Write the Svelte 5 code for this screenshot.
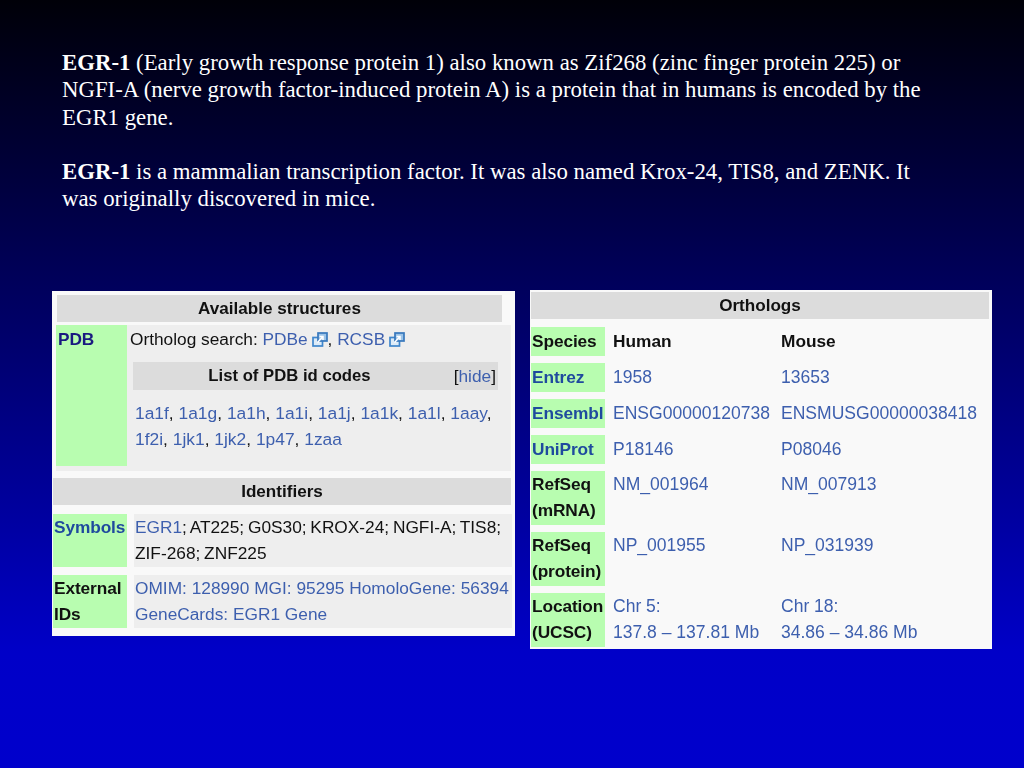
<script>
  const rows = [
    { head: "Entrez", link: true, human: ["1958"], mouse: ["13653"] },
    { head: "Ensembl", link: true, human: ["ENSG00000120738"], mouse: ["ENSMUSG00000038418"] },
    { head: "UniProt", link: true, human: ["P18146"], mouse: ["P08046"] },
    { head: "RefSeq (mRNA)", human: ["NM_001964"], mouse: ["NM_007913"], tall: true },
    { head: "RefSeq (protein)", human: ["NP_001955"], mouse: ["NP_031939"], tall: true },
    { head: "Location (UCSC)", human: ["Chr 5:", "137.8 – 137.81 Mb"], mouse: ["Chr 18:", "34.86 – 34.86 Mb"], tall: true },
  ];
  const codes = ["1a1f", "1a1g", "1a1h", "1a1i", "1a1j", "1a1k", "1a1l", "1aay", "1f2i", "1jk1", "1jk2", "1p47", "1zaa"];
</script>

{#snippet extIcon()}
  <svg class="ext" viewBox="0 0 16 15" width="16" height="15" aria-hidden="true">
    <rect x="1" y="5.5" width="9.5" height="8.5" fill="#dcebf8" stroke="#3f86cc" stroke-width="1.7" />
    <rect x="6" y="1" width="9" height="8" fill="#9cc4e8" stroke="#3878bd" stroke-width="1.7" />
    <path d="M5.5 10.5 L10.5 5 M7.5 4.6 H11 V8" fill="none" stroke="#fff" stroke-width="1.5" />
  </svg>
{/snippet}

<main class="slide">
  <section class="intro">
    <p><b>EGR-1</b> (Early growth response protein 1) also known as Zif268 (zinc finger protein 225) or<br />NGFI-A (nerve growth factor-induced protein A) is a protein that in humans is encoded by the<br />EGR1 gene.</p>
    <p><b>EGR-1</b> is a mammalian transcription factor. It was also named Krox-24, TIS8, and ZENK. It<br />was originally discovered in mice.</p>
  </section>

  <section class="tables">
    <div class="panel left">
      <h2 class="bar first">Available structures</h2>
      <div class="pdb">
        <div class="side"><a href="#pdb"><b>PDB</b></a></div>
        <div class="pdb-body">
          <div class="search">Ortholog search: <a href="#pdbe">PDBe</a> {@render extIcon()}, <a href="#rcsb">RCSB</a> {@render extIcon()}</div>
          <div class="bar inner"><span>List of PDB id codes</span><span class="hide">[<a href="#hide">hide</a>]</span></div>
          <div class="codes">
            {#each codes as code, i}<a href="#{code}">{code}</a>{i < codes.length - 1 ? ", " : ""}{#if i === 7}<br />{/if}{/each}
          </div>
        </div>
      </div>

      <h2 class="bar ident">Identifiers</h2>
      <div class="id-row">
        <div class="side"><a href="#symbols"><b>Symbols</b></a></div>
        <div class="id-cell symbols"><a href="#egr1">EGR1</a>; AT225; G0S30; KROX-24; NGFI-A; TIS8;<br />ZIF-268; ZNF225</div>
      </div>
      <div class="id-row">
        <div class="side"><b>External<br />IDs</b></div>
        <div class="id-cell">
          <a href="#omim">OMIM:</a> <a href="#128990">128990</a> <a href="#mgi">MGI:</a> <a href="#95295">95295</a> <a href="#hg">HomoloGene:</a> <a href="#56394">56394</a><br />
          <a href="#gc">GeneCards:</a> <a href="#gene">EGR1 Gene</a>
        </div>
      </div>
    </div>

    <div class="panel right">
      <h2 class="bar first">Orthologs</h2>
      <div class="orth">
        <div class="side"><b>Species</b></div>
        <b class="val">Human</b>
        <b class="val">Mouse</b>
        {#each rows as row}
          <div class="side" class:tall={row.tall}>
            {#if row.link}<a href="#{row.head}"><b>{row.head}</b></a>{:else}<b>{row.head}</b>{/if}
          </div>
          <div class="val">{#each row.human as line}<a href="#h">{line}</a><br />{/each}</div>
          <div class="val">{#each row.mouse as line}<a href="#m">{line}</a><br />{/each}</div>
        {/each}
      </div>
    </div>
  </section>
</main>

<style>
  :global(body) {
    margin: 0;
  }

  .slide {
    width: 1024px;
    height: 768px;
    overflow: hidden;
    background: linear-gradient(#000008, #0000c8 85%, #0000cc);
  }

  .intro {
    height: 290px;
    box-sizing: border-box;
    padding: 49px 0 0 62px;
    color: #fff;
    font: 22.8px/27.3px "Liberation Serif", serif;
  }

  .intro p {
    margin: 0 0 27.3px;
  }

  .tables {
    display: flex;
    align-items: flex-start;
    gap: 15px;
    padding-left: 52px;
  }

  .panel {
    box-sizing: border-box;
    background: #f9f9f9;
    color: #111;
    font: 17.3px/26px "Liberation Sans", sans-serif;
    filter: blur(0.45px);
  }

  .left {
    width: 463px;
    margin-top: 1px;
    height: 345px;
    padding: 4px 4px 0 1px;
  }

  .right {
    width: 462px;
    height: 359px;
    padding: 2px 3px 0 1px;
    font-size: 17.55px;
  }

  a {
    color: #3d5fae;
    text-decoration: none;
  }

  .side a {
    color: #1f4a9e;
  }

  .side b {
    font-size: 17.3px;
    letter-spacing: -0.1px;
  }

  .bar {
    margin: 0;
    height: 27px;
    background: #dcdcdc;
    color: #111;
    font-size: 17.1px;
    font-weight: bold;
    line-height: 27px;
    text-align: center;
  }

  .left .first {
    margin: 0 9px 0 4px;
  }

  .side {
    background: #b8fdb0;
    padding-left: 1px;
    box-sizing: border-box;
  }

  .pdb {
    display: grid;
    grid-template-columns: 71px 384px;
    margin: 3px 0 0 3px;
    background: #eeeeee;
    height: 146px;
  }

  .pdb .side {
    height: 141px;
    padding: 1px 0 0 2px;
    color: #1a1a80;
  }

  .pdb .side a {
    color: #1a1a80;
  }

  .pdb-body {
    padding: 1px 13px 0 3px;
  }

  .search {
    white-space: nowrap;
  }

  .ext {
    vertical-align: -2px;
    margin-left: -1px;
  }

  .inner {
    position: relative;
    margin: 10px 0 0 3px;
    height: 28px;
    font-size: 16.7px;
    line-height: 28px;
    padding-right: 52px;
  }

  .hide {
    position: absolute;
    right: 2px;
    top: 0;
    font-size: 17.3px;
    font-weight: normal;
  }

  .codes {
    margin: 10px 0 0 5px;
    white-space: nowrap;
    font-size: 17.4px;
  }

  .ident {
    margin-top: 7px;
  }

  .id-row {
    display: grid;
    grid-template-columns: 74px 378px;
    gap: 7px;
    margin-top: 8px;
  }

  .ident + .id-row {
    margin-top: 9px;
  }

  .id-row .side {
    height: 53px;
    padding: 0 0 0 1px;
  }

  .id-cell {
    background: #eeeeee;
    padding-left: 1px;
    white-space: nowrap;
  }

  .symbols {
    word-spacing: -1px;
  }

  .orth {
    display: grid;
    grid-template-columns: 74px 168px 1fr;
    row-gap: 7px;
    margin-top: 8px;
    align-items: start;
  }

  .orth .side {
    height: 29px;
    line-height: 28px;
    white-space: normal;
    padding-right: 4px;
  }

  .orth .side.tall {
    height: 54px;
    line-height: 26px;
  }

  .orth .val {
    padding-left: 8px;
    line-height: 28px;
    white-space: nowrap;
  }

  .orth b.val {
    font-size: 17.3px;
  }

  .orth .side.tall + .val,
  .orth .side.tall + .val + .val {
    line-height: 26px;
  }
</style>
